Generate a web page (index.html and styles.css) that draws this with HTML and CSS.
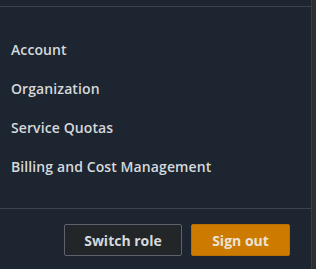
FILE: index.html
```
<!DOCTYPE html>
<html lang="en">
<head>
    <meta charset="UTF-8">
    <meta name="viewport" content="width=device-width, initial-scale=1.0">
    <title>Account menu</title>
    <link rel="stylesheet" href="styles.css">
</head>
<body>
    <div class="panel">
        <div class="menu">
            <a class="menu-item" href="#">Account</a>
            <a class="menu-item" href="#">Organization</a>
            <a class="menu-item" href="#">Service Quotas</a>
            <a class="menu-item" href="#">Billing and Cost Management</a>
        </div>
        <div class="actions">
            <button class="btn btn-secondary">Switch role</button>
            <button class="btn btn-primary">Sign out</button>
        </div>
    </div>
    <div class="scroll-edge"></div>
</body>
</html>
```

FILE: styles.css
```
body {
    margin: 0;
    height: 269px;
    display: flex;
    background-color: #1d2530;
    font-family: "Open Sans", Arial, sans-serif;
    overflow: hidden;
}
.panel {
    flex: 1;
    padding-top: 6px;
}
.menu {
    border-top: 1px solid #3b434e;
    border-bottom: 1px solid #3b434e;
    padding: 23px 0 22px;
    display: flex;
    flex-direction: column;
}
.menu-item {
    height: 39px;
    line-height: 39px;
    padding-left: 11px;
    color: #d5d9dc;
    font-size: 14px;
    font-weight: 600;
    letter-spacing: 0.1px;
    text-decoration: none;
}
.actions {
    display: flex;
    justify-content: flex-end;
    gap: 9px;
    padding: 15px 21px 0 0;
}
.btn {
    height: 32px;
    font-family: inherit;
    font-size: 14px;
    font-weight: 700;
    color: #d5d9dc;
    cursor: pointer;
}
.btn-secondary {
    width: 118px;
    background-color: #232628;
    border: 1px solid #5b636c;
    border-radius: 2px;
}
.btn-primary {
    width: 99px;
    background-color: #cc7a00;
    border: 1px solid #b86e00;
    border-radius: 2px;
    color: #ebe3d6;
}
.scroll-edge {
    width: 4px;
    background-color: #2c2e30;
    border-left: 1px solid #3a3d40;
}
```
